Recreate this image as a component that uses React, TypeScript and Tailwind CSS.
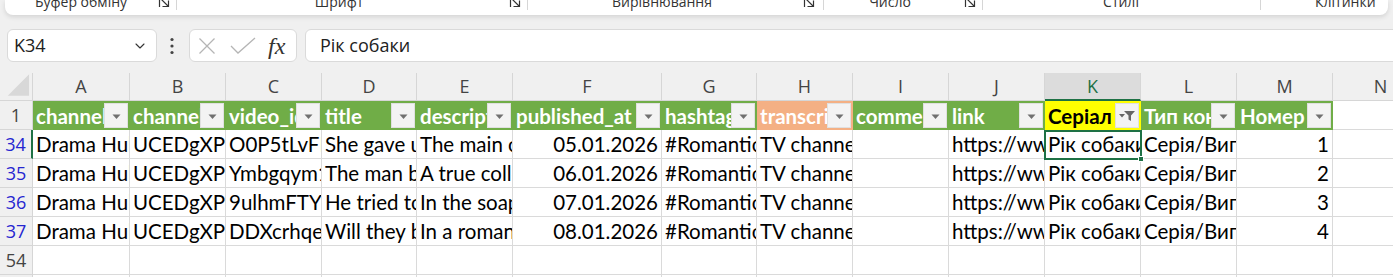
import { ChevronDown } from "lucide-react";

interface Col {
  l: string;
  w: string;
}

const cols: Col[] = [
  { l: "A", w: "w-[97px]" },
  { l: "B", w: "w-[96px]" },
  { l: "C", w: "w-[96px]" },
  { l: "D", w: "w-[95px]" },
  { l: "E", w: "w-[96px]" },
  { l: "F", w: "w-[149px]" },
  { l: "G", w: "w-[95px]" },
  { l: "H", w: "w-[96px]" },
  { l: "I", w: "w-[96px]" },
  { l: "J", w: "w-[96px]" },
  { l: "K", w: "w-[96px]" },
  { l: "L", w: "w-[96px]" },
  { l: "M", w: "w-[96px]" },
  { l: "N", w: "w-[96px]" },
];

const headers = [
  { t: "channel_title", bg: "bg-[#70ad47] text-white" },
  { t: "channel_id", bg: "bg-[#70ad47] text-white" },
  { t: "video_id", bg: "bg-[#70ad47] text-white" },
  { t: "title", bg: "bg-[#70ad47] text-white" },
  { t: "description", bg: "bg-[#70ad47] text-white" },
  { t: "published_at", bg: "bg-[#70ad47] text-white" },
  { t: "hashtags", bg: "bg-[#70ad47] text-white" },
  { t: "transcript", bg: "bg-[#f4b084] text-white" },
  { t: "comments", bg: "bg-[#70ad47] text-white" },
  { t: "link", bg: "bg-[#70ad47] text-white" },
  { t: "Серіал", bg: "bg-[#ffff00] text-black", filtered: true },
  { t: "Тип контенту", bg: "bg-[#70ad47] text-white" },
  { t: "Номер", bg: "bg-[#70ad47] text-white" },
];

const rows = [
  {
    n: "34",
    c: ["Drama Hub", "UCEDgXPsQ1", "O0P5tLvFIxk", "She gave up", "The main character", "05.01.2026", "#RomanticDrama", "TV channel", "", "https://www.youtube.com", "Рік собаки", "Серія/Випуск", "1"],
  },
  {
    n: "35",
    c: ["Drama Hub", "UCEDgXPsQ1", "Ymbgqym1x", "The man behind", "A true collector", "06.01.2026", "#RomanticDrama", "TV channel", "", "https://www.youtube.com", "Рік собаки", "Серія/Випуск", "2"],
  },
  {
    n: "36",
    c: ["Drama Hub", "UCEDgXPsQ1", "9ulhmFTY-k", "He tried to", "In the soap", "07.01.2026", "#RomanticDrama", "TV channel", "", "https://www.youtube.com", "Рік собаки", "Серія/Випуск", "3"],
  },
  {
    n: "37",
    c: ["Drama Hub", "UCEDgXPsQ1", "DDXcrhqe", "Will they be", "In a romantic", "08.01.2026", "#RomanticDrama", "TV channel", "", "https://www.youtube.com", "Рік собаки", "Серія/Випуск", "4"],
  },
];

const Launcher = () => (
  <svg width="12" height="12" viewBox="0 0 12 12" className="-mt-[4px] shrink-0" fill="none" stroke="#333" strokeWidth="1.2">
    <path d="M1.5 0 V11 M3.5 3.5 L10 10 M10.5 4.5 V10.5 H4.5" />
  </svg>
);

const Sep = () => <div className="w-px h-[10px] bg-[#d6d6d6] shrink-0" />;

const Ribbon = () => (
  <div className="mx-[5px] h-[15px] shrink-0 bg-white rounded-b-[8px] shadow-[0_2px_5px_rgba(0,0,0,0.12)] flex overflow-hidden font-['Open_Sans',sans-serif] text-[14px] leading-[20px] text-[#333]">
    <div className="w-[152px] shrink-0 text-center -mt-[8px]">Буфер обміну</div>
    <div className="w-[1px] shrink-0" />
    <Launcher />
    <div className="w-[6px] shrink-0" />
    <Sep />
    <div className="w-[324px] shrink-0 text-center -mt-[8px]">Шрифт</div>
    <div className="w-[8px] shrink-0" />
    <Launcher />
    <div className="w-[6px] shrink-0" />
    <Sep />
    <div className="w-[268px] shrink-0 text-center -mt-[8px]">Вирівнювання</div>
    <div className="w-[7px] shrink-0" />
    <Launcher />
    <div className="w-[8px] shrink-0" />
    <Sep />
    <div className="w-[132px] shrink-0 text-center -mt-[8px]">Число</div>
    <div className="w-[8px] shrink-0" />
    <Launcher />
    <div className="w-[6px] shrink-0" />
    <Sep />
    <div className="w-[276px] shrink-0 text-center -mt-[8px]">Стилі</div>
    <div className="w-[1px] shrink-0" />
    <Sep />
    <div className="flex-1 pl-[54px] -mt-[8px] whitespace-nowrap">Клітинки</div>
  </div>
);

const FormulaBar = () => (
  <div className="flex items-center h-[33px] mt-[14px] shrink-0 font-['Open_Sans',sans-serif] text-[#222]">
    <div className="ml-[7px] w-[150px] h-[33px] rounded-[6px] border border-[#dadada] bg-white flex items-center pl-[6px] pr-[8px] text-[18px]">
      <span className="flex-1">K34</span>
      <ChevronDown size={16} strokeWidth={1.6} color="#333" />
    </div>
    <svg width="8" height="18" viewBox="0 0 8 18" className="ml-[11px]">
      <circle cx="4" cy="2.5" r="1.6" fill="#444" />
      <circle cx="4" cy="9" r="1.6" fill="#444" />
      <circle cx="4" cy="15.5" r="1.6" fill="#444" />
    </svg>
    <div className="ml-[13px] w-[108px] h-[33px] rounded-[6px] border border-[#dadada] bg-white flex items-center pl-[8px]">
      <svg width="18" height="18" viewBox="0 0 18 18" fill="none" stroke="#b5b5b5" strokeWidth="1.3">
        <path d="M1.5 1.5 L16.5 16.5 M16.5 1.5 L1.5 16.5" />
      </svg>
      <svg width="26" height="18" viewBox="0 0 26 18" fill="none" stroke="#b5b5b5" strokeWidth="1.3" className="ml-[14px]">
        <path d="M1 9 L8 16 L25 1" />
      </svg>
      <span className="ml-[12px] font-['Liberation_Serif',serif] italic text-[24px] leading-none text-[#333]">fx</span>
    </div>
    <div className="ml-[8px] flex-1 -mr-[12px] h-[33px] rounded-[6px] border border-[#dadada] bg-white flex items-center pl-[14px] text-[18px]">
      Рік собаки
    </div>
  </div>
);

const FilterBtn = ({ filtered }: { filtered?: boolean }) => (
  <div className="shrink-0 w-[24px] h-[25px] mr-[2px] bg-[#f3f3f3] border border-[#e0e0e0] flex items-center justify-center">
    {filtered ? (
      <svg width="18" height="12" viewBox="0 0 18 12">
        <path d="M1 4 H7 L4 7.5 Z" fill="#666" />
        <path d="M6 1 H17 L13 5.5 V11 L10.5 9.5 V5.5 Z" fill="#666" />
      </svg>
    ) : (
      <svg width="9" height="6" viewBox="0 0 9 6" className="mt-[3px]">
        <path d="M0.5 0.5 H8.5 L4.5 5 Z" fill="#707070" />
      </svg>
    )}
  </div>
);

const RowHead = ({ n, blue, active }: { n: string; blue?: boolean; active?: boolean }) => (
  <div
    className={
      "w-[33px] shrink-0 h-[29px] bg-[#f0f0f0] border-b border-[#d6d6d6] text-center leading-[28px] font-['Open_Sans',sans-serif] text-[18px] " +
      (blue ? "text-[#2626d0] " : "text-[#444] ") +
      (active ? "border-r-2 border-r-[#1e7145]" : "border-r border-r-[#d6d6d6]")
    }
  >
    {n}
  </div>
);

export default function App() {
  return (
    <div className="w-[1393px] h-[277px] overflow-hidden bg-[#f0f0f0] flex flex-col">
      <Ribbon />
      <FormulaBar />

      <div className="mt-[11px] flex flex-col font-['Lato',sans-serif] text-[20.5px]">
        {/* column letters */}
        <div className="flex h-[28px] shrink-0">
          <div className="w-[33px] shrink-0 h-[28px] border-r border-b border-[#d6d6d6] flex items-end justify-end">
            <svg width="33" height="28" viewBox="0 0 33 28">
              <path d="M8 24 L30 2 L30 24 Z" fill="#d8d8d8" />
            </svg>
          </div>
          {cols.map((c) => (
            <div
              key={c.l}
              className={
                c.w +
                " shrink-0 h-[28px] border-r border-[#d6d6d6] text-center leading-[27px] font-['Open_Sans',sans-serif] text-[18px] " +
                (c.l === "K" ? "bg-[#dcdcdc] text-[#1e7145] border-b-2 border-b-[#1e7145]" : "text-[#444] border-b border-b-[#d6d6d6]")
              }
            >
              {c.l}
            </div>
          ))}
        </div>

        {/* header row 1 */}
        <div className="flex h-[29px] shrink-0">
          <div className="w-[33px] shrink-0 h-[29px] bg-[#f0f0f0] border-r border-b border-[#d6d6d6] text-center leading-[28px] font-['Open_Sans',sans-serif] text-[18px] text-[#444]">
            1
          </div>
          {headers.map((h, i) => (
            <div key={i} className={cols[i].w + " shrink-0 h-[29px] flex items-center font-bold " + h.bg}>
              <span className="flex-1 overflow-hidden whitespace-nowrap pl-[3px] leading-[28px]">{h.t}</span>
              <FilterBtn filtered={h.filtered} />
            </div>
          ))}
          <div className="w-[96px] shrink-0 h-[29px] bg-white border-r border-b border-[#dadada]" />
        </div>

        {/* data rows */}
        {rows.map((r, ri) => (
          <div key={r.n} className="flex h-[29px] shrink-0">
            <RowHead n={r.n} blue active={ri === 0} />
            {r.c.map((v, ci) => (
              <div
                key={ci}
                className={
                  cols[ci].w +
                  " shrink-0 h-[29px] bg-white border-r border-b border-[#dadada] overflow-hidden whitespace-nowrap leading-[28px] text-black " +
                  (ci === 5 || ci === 12 ? "text-right pr-[3px]" : "pl-[3px]")
                }
              >
                {v}
              </div>
            ))}
            <div className="w-[96px] shrink-0 h-[29px] bg-white border-r border-b border-[#dadada]" />
          </div>
        ))}

        {/* empty row 54 and next */}
        {["54", "55"].map((n) => (
          <div key={n} className="flex h-[29px] shrink-0">
            <RowHead n={n} />
            {cols.map((c) => (
              <div key={c.l} className={c.w + " shrink-0 h-[29px] bg-white border-r border-b border-[#dadada]"} />
            ))}
          </div>
        ))}
      </div>

      {/* selection overlay for K34 */}
      <div className="absolute left-[1044px] top-[130px] w-[98px] h-[30px] border-2 border-[#1e7145] pointer-events-none">
        <div className="absolute -right-[4px] -bottom-[4px] w-[6px] h-[6px] bg-[#1e7145] border border-white" />
      </div>
    </div>
  );
}
